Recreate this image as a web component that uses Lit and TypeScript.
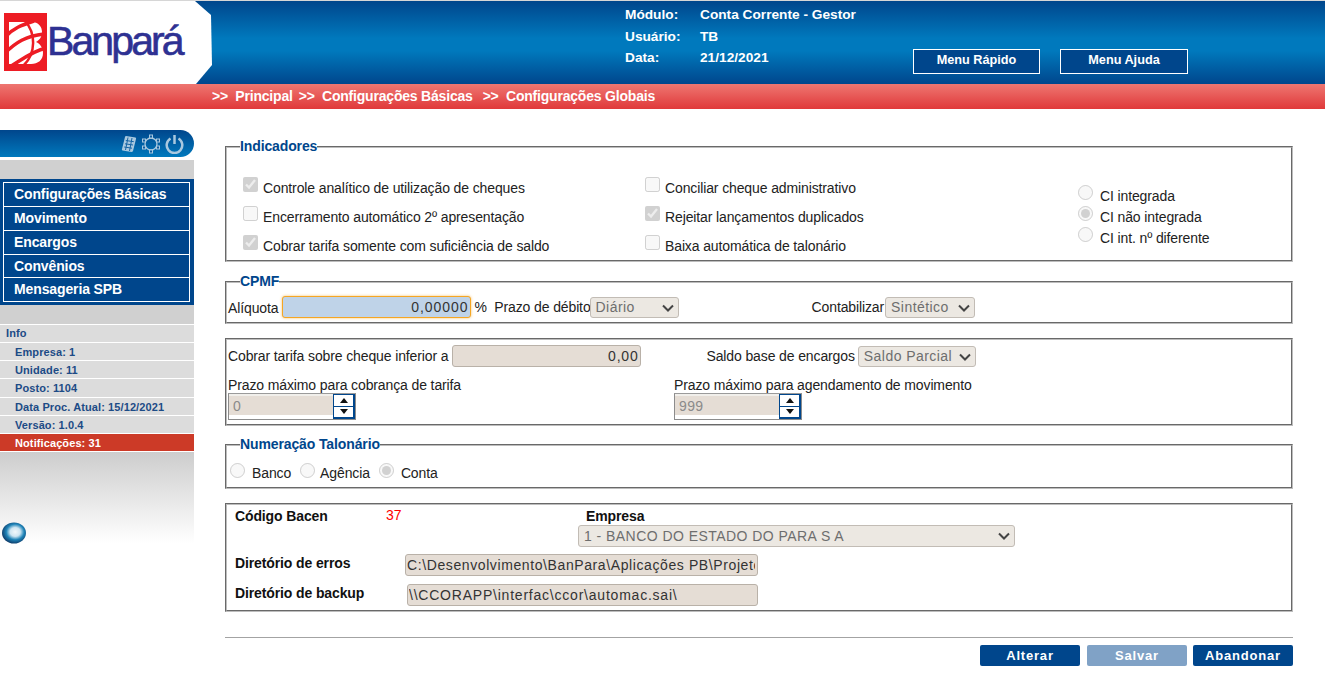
// app.ts — Banpará "Configurações Globais" screen
import { LitElement, html, css, svg } from 'lit';
import { customElement } from 'lit/decorators.js';

const MENU = ['Configurações Básicas', 'Movimento', 'Encargos', 'Convênios', 'Mensageria SPB'];
const INFO = ['Empresa: 1', 'Unidade: 11', 'Posto: 1104', 'Data Proc. Atual: 15/12/2021', 'Versão: 1.0.4'];

const LOGO_MARK = svg`
  <svg width="44" height="58" viewBox="0 0 44 58">
    <rect width="43" height="58" fill="#ed1c24" />
    <path d="M5 9H27C35 9 38 14 38 19C38 24 35.500 27 32 29C36.500 31 39 35 39 40C39 47 34 51 27 51H5Z" fill="#fff" />
    <g fill="none" stroke="#ed1c24">
      <path d="M0 25C9 15 18 12 30 8" stroke-width="3.500" />
      <path d="M0 41C12 29 22 23 40 21" stroke-width="3.500" />
      <path d="M2 56C16 48 28 38 42 35" stroke-width="3.500" />
      <path d="M21 8C32 20 32 40 20 52" stroke-width="2.500" />
      <path d="M0 8V17M0 44V52" stroke-width="9" />
    </g>
  </svg>`;

const CALC_ICON = svg`
  <svg width="16" height="18" viewBox="0 0 16 18">
    <path d="M5 1L14.500 2.500Q15.500 3 15 4L12 16Q11.500 17 10.500 17L1.500 15.500Q.5 15 1 14L4 2Q4.300 1 5 1Z" fill="#a9c8df" />
    <path d="M4.800 5.500L12.800 6.700M4 8.800L12 10M3.200 12L11 13.200M7 2.500L4.500 15M11 3L8.500 16" stroke="#1765a5" stroke-width="1" fill="none" />
  </svg>`;

const GEAR_ICON = svg`
  <svg width="20" height="20" viewBox="0 0 20 20" fill="none" stroke="#a9c8df" stroke-width="1.300">
    <circle cx="10" cy="10" r="6" />
    <g fill="#0e5c9f" stroke-width="1">
      <rect x="8.500" y="1" width="3" height="3" />
      <rect x="8.500" y="16" width="3" height="3" />
      <rect x="1.500" y="5" width="3" height="3" />
      <rect x="15.500" y="5" width="3" height="3" />
      <rect x="1.500" y="12" width="3" height="3" />
      <rect x="15.500" y="12" width="3" height="3" />
    </g>
  </svg>`;

const POWER_ICON = svg`
  <svg width="19" height="20" viewBox="0 0 19 20" fill="none" stroke="#a9c8df" stroke-width="2.500">
    <path d="M5.500 4.500A7.800 7.800 0 1 0 13.500 4.500" />
    <path d="M9.500 1V10" />
  </svg>`;

const GLOBE_ICON = svg`
  <svg width="26" height="24" viewBox="0 0 26 24">
    <defs>
      <radialGradient id="globe" cx="55%" cy="45%" r="60%">
        <stop offset="0" stop-color="#f2f8fb" />
        <stop offset=".35" stop-color="#cfe6f2" />
        <stop offset=".62" stop-color="#1f84b8" />
        <stop offset="1" stop-color="#0b2f5c" />
      </radialGradient>
    </defs>
    <ellipse cx="13" cy="12" rx="12" ry="10.500" fill="url(#globe)" />
  </svg>`;

const CHEVRON = svg`
  <svg width="12" height="8" viewBox="0 0 12 8" fill="none" stroke="#444" stroke-width="2"><path d="M1 1.500L6 6.500L11 1.500" /></svg>`;

@customElement('spin-box')
class SpinBox extends LitElement {
  static properties = { value: { type: String } };
  declare value: string;

  static styles = css`
    :host { display: flex; width: 128px; height: 27px; box-sizing: border-box;
      border: 1px solid #8c8c8c; border-top-color: #9a9a9a; background: #fff; }
    .field { flex: 1; display: flex; flex-direction: column; background: #f1efeb; padding-top: 2px; }
    input { box-sizing: border-box; width: 100%; height: 19px; border: 0; margin: 0; padding: 0 4px;
      background: #e5ddd5; color: #8a8a8a; font: 14px "Liberation Sans", sans-serif; letter-spacing: .4px; }
    .rest { flex: 1; background: #fff; }
    .btns { width: 22px; display: flex; flex-direction: column; border: 1px solid #00468c; border-left-width: 1px;
      box-sizing: border-box; border-bottom-width: 2px; border-right-width: 2px; }
    .up, .down { flex: 1; display: flex; align-items: center; justify-content: center; background: #fff; }
    .up { border-bottom: 1px solid #00468c; }
    .up i { border: 4px solid transparent; border-top: 0; border-bottom: 5px solid #111; }
    .down i { border: 4px solid transparent; border-bottom: 0; border-top: 5px solid #111; }
  `;

  render() {
    return html`
      <div class="field"><input disabled .value=${this.value}><div class="rest"></div></div>
      <div class="btns">
        <div class="up"><i></i></div>
        <div class="down"><i></i></div>
      </div>`;
  }
}

@customElement('app-root')
class AppRoot extends LitElement {
  static styles = css`
    :host { display: block; width: 1325px; height: 695px; overflow: hidden; background: #fff;
      font: 14px "Liberation Sans", Arial, sans-serif; letter-spacing: -.12px; color: #222; }

    /* ── top bar ── */
    .top { display: flex; height: 84px; box-sizing: border-box; border-top: 1px solid #d6d6d6;
      background: linear-gradient(#00468c 0%, #0079bd 45%, #0079bd 60%, #00468c 100%); }
    .logo { width: 212px; display: flex; align-items: flex-start; padding: 12px 0 0 4px; box-sizing: border-box;
      background: #fff; clip-path: polygon(0 0, 195px 0, 211px 14px, 212px 64px, 196px 83px, 0 83px); }
    .logo span { font-size: 41px; line-height: 56px; color: #2e3192; letter-spacing: -2.900px; margin-left: -1px;
      -webkit-text-stroke: .6px #2e3192; }
    .who { margin-left: 413px; padding-top: 6px; display: grid; grid-template-columns: 75px auto;
      grid-auto-rows: 21.500px; align-content: start; width: 288px; font-weight: bold; font-size: 13.700px; letter-spacing: 0;
      line-height: 15px; color: #fff; }
    .top-btns { display: flex; gap: 20px; padding-top: 48px; }
    .top-btns button { width: 128px; height: 25px; box-sizing: border-box; padding: 0 0 3px; border: 1px solid #fff; background: #00468c;
      color: #fff; font: bold 12.700px "Liberation Sans", sans-serif; }
    .top-btns button:first-child { width: 127px; }

    .crumb { height: 25px; background: linear-gradient(#ee7671, #e0393a); display: flex; padding-left: 212px;
      font-weight: bold; color: #fff; line-height: 24px; white-space: pre; letter-spacing: -.2px; }
    .crumb span:nth-child(2) { margin-left: 6px; }
    .crumb span:nth-child(3) { margin-left: 10px; }

    .body { display: flex; padding-top: 21px; }

    /* ── sidebar ── */
    .side { width: 194px; flex: none; }
    .pill { height: 27px; border-radius: 0 14px 14px 0; background: linear-gradient(#00468c, #0079bd);
      display: flex; align-items: center; justify-content: flex-end; gap: 4px; padding-right: 10px; box-sizing: border-box; }
    .gray1 { height: 19px; margin-top: 3px; background: #d0d0d0; }
    .menu { background: #00468c; padding: 3px 4px 3px 3px; }
    .menu div { height: 23px; box-sizing: content-box; border: 1px solid #fff; border-top-width: 0; padding-left: 10px;
      color: #fff; font-weight: bold; line-height: 23px; }
    .menu div:first-child { border-top-width: 1px; }
    .menu div:nth-child(4) { height: 22px; }
    .gray2 { height: 19px; background: #d0d0d0; }
    .info div { height: 17.140px; border-top: 1px solid #fff; background: #dcdcdc; padding-left: 15px; color: #1c4b86;
      font: bold 11px/18px "Liberation Sans", sans-serif; letter-spacing: .1px; }
    .info div.head { padding-left: 6px; line-height: 17px; }
    .info div.alert { background: #cc3a27; color: #fff; border-bottom: 1px solid #fff; }
    .fade { height: 91px; background: linear-gradient(#cdcdcd, #fff); padding: 69px 0 0 1px; box-sizing: border-box; }
    .fade svg { display: block; }

    /* ── form ── */
    .main { margin-left: 31px; width: 1068px; padding-top: 9px; }
    fieldset { margin: 0 0 14px; padding: 0; border: 2px groove #bdbdbd; box-sizing: border-box; min-width: 0; }
    legend { margin-left: 13px; padding: 0 0 2px; color: #00468c; font-weight: bold; font-size: 14px; line-height: 14px; }
    label, .t { white-space: nowrap; }
    input[type='checkbox'], input[type='radio'] { width: 15px; height: 15px; margin: 0; flex: none; }
    .ck { display: flex; align-items: flex-start; gap: 5px; height: 29px; }
    .ck span { padding-top: 3px; }
    .rd { display: flex; align-items: flex-start; gap: 7px; height: 21px; }
    .rd span { padding-top: 3px; }

    .ind { height: 123px; margin-bottom: 12px; }
    .ind-grid { display: grid; grid-template-columns: 402px 433px auto; padding: 22px 0 0 16px; }
    .rad-col { padding-top: 8px; }

    .line { display: flex; align-items: center; }
    .cpmf { height: 50px; }
    .cpmf .line { padding: 6px 0 0 1px; }
    .aliq { padding-top: 2px; }
    .pct { box-sizing: border-box; width: 189px; height: 22px; margin: 0 3px 0 4px; padding: 0 2px; border: 1px solid #f5a623; border-radius: 3px;
      box-shadow: 0 0 3px #f5c06a; background: #bfd3e8; text-align: right; color: #333;
      font: 14px "Liberation Sans", sans-serif; letter-spacing: .95px; }
    .sel { display: inline-block; position: relative; flex: none; height: 21px; }
    .sel svg { position: absolute; right: 5px; top: 7px; pointer-events: none; }
    select { appearance: none; display: block; box-sizing: border-box; width: 100%; height: 100%; margin: 0; padding: 0 0 0 5px;
      border: 1px solid #c2bcb5; border-radius: 3px; background-color: #ece8e2; color: #6e6e6e; opacity: 1;
      font: 14px "Liberation Sans", sans-serif; letter-spacing: .45px; }
    .sel-d { width: 89px; margin-left: -1px; }
    .sel-c { width: 90px; }
    .lbl-c { margin-left: 133px; margin-right: 1px; }

    .tarifa { height: 88px; padding: 5px 0 0 1px; margin-bottom: 11px; }
    .ro { box-sizing: border-box; height: 22px; padding: 0 2px 0 1px; border: 1px solid #b9b1a8; border-radius: 3px; background: #e5ddd5;
      color: #333; font: 14px "Liberation Sans", sans-serif; letter-spacing: .78px; }
    .tar { width: 189px; margin-left: 4px; text-align: right; }
    .lbl-s { margin-left: 65px; margin-right: 3px; }
    .sel-s { width: 118px; }
    .tarifa-grid { display: grid; grid-template-columns: 446px auto; margin-top: 10px; line-height: 16px; }

    .num { height: 52px; }
    .num .line { padding: 10px 0 0 3px; }
    .num input { margin-right: 7px; margin-top: -3px; }
    .num span { margin-right: 9px; padding-top: 2px; }
    .num span.ag { margin-left: -2px; }

    .cfg { height: 109px; padding: 2px 0 0 8px; margin-bottom: 0; }
    .cfg b { color: #111; font-size: 14px; }
    .cfg-top { display: flex; height: 47px; }
    .cfg-top .code { width: 151px; padding-top: 1px; }
    .cfg-top .red { width: 200px; color: #f00; font-size: 14px; }
    .emp { margin-left: -8px; }
    .emp b { display: block; padding-left: 8px; line-height: 14px; margin-top: 2px; margin-bottom: 2px; }
    .sel-e { display: block; width: 437px; height: 22px; }
    .cfg-row { display: flex; height: 30px; }
    .cfg-row b { width: 170px; flex: none; line-height: 14px; padding-top: 2px; }
    .dir1 { width: 353px; letter-spacing: .6px; }
    .dir2 { margin-left: 2px; width: 351px; }

    .rule { height: 1px; background: #a3a3a3; margin-top: 25px; }
    .actions { display: flex; justify-content: flex-end; gap: 6px; margin-top: 7px; }
    .actions button { width: 100px; height: 21px; padding: 0; border: 0; border-radius: 2px; background: #00468c; color: #fff;
      font: bold 13px "Liberation Sans", sans-serif; letter-spacing: .8px; }
    .actions button[disabled] { background: #80a2c6; }
    .actions button:first-child { margin-right: 1px; }
  `;

  render() {
    return html`
      <div class="top">
        <div class="logo">${LOGO_MARK}<span>Banpará</span></div>
        <div class="who">
          <div>Módulo:</div><div>Conta Corrente - Gestor</div>
          <div>Usuário:</div><div>TB</div>
          <div>Data:</div><div>21/12/2021</div>
        </div>
        <div class="top-btns"><button>Menu Rápido</button><button>Menu Ajuda</button></div>
      </div>
      <div class="crumb"><span>&gt;&gt;  Principal</span><span>&gt;&gt;  Configurações Básicas</span><span>&gt;&gt;  Configurações Globais</span></div>

      <div class="body">
        <div class="side">
          <div class="pill">${CALC_ICON}${GEAR_ICON}${POWER_ICON}</div>
          <div class="gray1"></div>
          <div class="menu">${MENU.map((m) => html`<div>${m}</div>`)}</div>
          <div class="gray2"></div>
          <div class="info">
            <div class="head">Info</div>
            ${INFO.map((i) => html`<div>${i}</div>`)}
            <div class="alert">Notificações: 31</div>
          </div>
          <div class="fade">${GLOBE_ICON}</div>
        </div>

        <div class="main">
          <fieldset class="ind">
            <legend>Indicadores</legend>
            <div class="ind-grid">
              <div>
                ${this.check('Controle analítico de utilização de cheques', true)}
                ${this.check('Encerramento automático 2º apresentação', false)}
                ${this.check('Cobrar tarifa somente com suficiência de saldo', true)}
              </div>
              <div>
                ${this.check('Conciliar cheque administrativo', false)}
                ${this.check('Rejeitar lançamentos duplicados', true)}
                ${this.check('Baixa automática de talonário', false)}
              </div>
              <div class="rad-col">
                ${this.radio('ci', 'CI integrada', false)}
                ${this.radio('ci', 'CI não integrada', true)}
                ${this.radio('ci', 'CI int. nº diferente', false)}
              </div>
            </div>
          </fieldset>

          <fieldset class="cpmf">
            <legend>CPMF</legend>
            <div class="line">
              <span class="t aliq">Alíquota</span>
              <input class="pct" .value=${'0,00000'}>
              <span class="t">%&nbsp; Prazo de débito</span>
              ${this.select('sel-d', 'Diário')}
              <span class="t lbl-c">Contabilizar</span>
              ${this.select('sel-c', 'Sintético')}
            </div>
          </fieldset>

          <fieldset class="tarifa">
            <div class="line">
              <span class="t">Cobrar tarifa sobre cheque inferior a</span>
              <input class="ro tar" readonly .value=${'0,00'}>
              <span class="t lbl-s">Saldo base de encargos</span>
              ${this.select('sel-s', 'Saldo Parcial')}
            </div>
            <div class="tarifa-grid">
              <div><span class="t">Prazo máximo para cobrança de tarifa</span><spin-box value="0"></spin-box></div>
              <div><span class="t">Prazo máximo para agendamento de movimento</span><spin-box value="999"></spin-box></div>
            </div>
          </fieldset>

          <fieldset class="num">
            <legend>Numeração Talonário</legend>
            <div class="line">
              <input type="radio" name="tal" disabled><span>Banco</span>
              <input type="radio" name="tal" disabled><span class="ag">Agência</span>
              <input type="radio" name="tal" disabled checked><span>Conta</span>
            </div>
          </fieldset>

          <fieldset class="cfg">
            <div class="cfg-top">
              <div class="code"><b>Código Bacen</b></div>
              <div class="red">37</div>
              <div class="emp">
                <b>Empresa</b>
                ${this.select('sel-e', '1 - BANCO DO ESTADO DO PARA S A')}
              </div>
            </div>
            <div class="cfg-row">
              <b>Diretório de erros</b>
              <input class="ro dir1" readonly .value=${'C:\\Desenvolvimento\\BanPara\\Aplicações PB\\Projetos\\Erros'}>
            </div>
            <div class="cfg-row">
              <b>Diretório de backup</b>
              <input class="ro dir2" readonly .value=${'\\\\CCORAPP\\interfac\\ccor\\automac.sai\\'}>
            </div>
          </fieldset>

          <div class="rule"></div>
          <div class="actions">
            <button>Alterar</button>
            <button disabled>Salvar</button>
            <button>Abandonar</button>
          </div>
        </div>
      </div>
    `;
  }

  check(text: string, on: boolean) {
    return html`<label class="ck"><input type="checkbox" disabled ?checked=${on}><span>${text}</span></label>`;
  }

  radio(name: string, text: string, on: boolean) {
    return html`<label class="rd"><input type="radio" name=${name} disabled ?checked=${on}><span>${text}</span></label>`;
  }

  select(cls: string, text: string) {
    return html`<span class="sel ${cls}"><select disabled><option>${text}</option></select>${CHEVRON}</span>`;
  }
}
